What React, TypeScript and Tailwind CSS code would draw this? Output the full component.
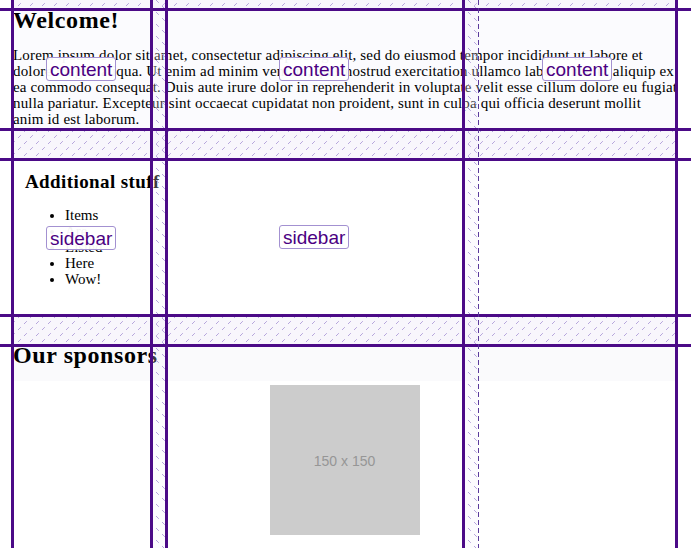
import React from "react";

const lines1 = [
  "Lorem ipsum dolor sit amet, consectetur adipiscing elit, sed do eiusmod tempor incididunt ut labore et",
  "dolore magna aliqua. Ut enim ad minim veniam, quis nostrud exercitation ullamco laboris nisi ut aliquip ex",
  "ea commodo consequat. Duis aute irure dolor in reprehenderit in voluptate velit esse cillum dolore eu fugiat",
  "nulla pariatur. Excepteur sint occaecat cupidatat non proident, sunt in culpa qui officia deserunt mollit",
  "anim id est laborum.",
];

function Label({ text, x, y }: { text: string; x: number; y: number }) {
  return (
    <div
      className="absolute h-[24px] px-[3px] border border-[#a391d1] rounded-[3px] bg-white/95 text-[#4b0082] text-[19px] leading-[23px] font-['Liberation_Sans',Arial,sans-serif] whitespace-nowrap"
      style={{ left: x, top: y }}
    >
      {text}
    </div>
  );
}

function Overlay() {
  const vLines = [11, 150, 165, 462, 675];
  const hLines = [8, 128, 158, 314, 344];
  return (
    <svg className="absolute inset-0 pointer-events-none" width={691} height={548} viewBox="0 0 691 548">
      <defs>
        <pattern id="hatchF" width="12" height="12" patternUnits="userSpaceOnUse">
          <path d="M0 12 L12 0" stroke="#b6a5dc" strokeWidth="1" strokeDasharray="4 4.5" />
        </pattern>
        <pattern id="hatchB" width="12" height="12" patternUnits="userSpaceOnUse">
          <path d="M0 0 L12 12" stroke="#b6a5dc" strokeWidth="1" strokeDasharray="4 4.5" />
        </pattern>
      </defs>
      {[
        [0, 8],
        [131, 27],
        [317, 27],
      ].map(([y, h], i) => (
        <g key={"rg" + i}>
          <rect x={14} y={y} width={661} height={h} fill="#f8f6fc" />
          <rect x={14} y={y} width={661} height={h} fill="url(#hatchF)" />
        </g>
      ))}
      {[
        [153, 12],
        [465, 13],
      ].map(([x, w], i) => (
        <g key={"cg" + i}>
          <rect x={x} y={0} width={w} height={548} fill="#f4f0fb" fillOpacity="0.25" />
          <rect x={x} y={0} width={w} height={548} fill="url(#hatchB)" />
        </g>
      ))}
      {vLines.map((x) => (
        <rect key={"v" + x} x={x} y={0} width={3} height={548} fill="#4b0a87" />
      ))}
      {hLines.map((y) => (
        <rect key={"h" + y} x={0} y={y} width={691} height={3} fill="#4b0a87" />
      ))}
      <line x1={478.5} y1={0} x2={478.5} y2={548} stroke="#5b3a9c" strokeWidth="1" strokeDasharray="5 3" />
    </svg>
  );
}

export default function App() {
  return (
    <div className="relative w-[691px] h-[548px] overflow-hidden bg-white text-black font-['Liberation_Serif','Times_New_Roman',serif]">
      <div className="ml-[12px] w-[665px] flex flex-col">
        <section className="h-[131px] pt-[8px] pl-[1px] bg-[#fbfbfe]">
          <h2 className="text-[24px] leading-[24px] font-bold tracking-[0.6px]">Welcome!</h2>
          <p className="mt-[15px] text-[15px] leading-[16px] tracking-[0.16px]">
            {lines1.map((l, i) => (
              <span key={i} className="block whitespace-nowrap">
                {l}
              </span>
            ))}
          </p>
        </section>
        <div className="h-[27px]" />
        <section className="h-[159px] pt-[13px] pl-[13px]">
          <h3 className="text-[19px] leading-[22px] font-bold whitespace-nowrap tracking-[0.4px]">Additional stuff</h3>
          <ul className="mt-[14px] pl-[40px] list-disc text-[15px] leading-[16px]">
            <li>Items</li>
            <li>Are</li>
            <li>Listed</li>
            <li>Here</li>
            <li>Wow!</li>
          </ul>
        </section>
        <div className="h-[26px]" />
        <section className="flex flex-col">
          <h2 className="pl-[1px] text-[24px] leading-[24px] font-bold tracking-[0.6px] bg-[#fafafc] pb-[14px]">Our sponsors</h2>
          <div className="mt-[4px] mx-auto w-[150px] h-[150px] bg-[#cccccc] flex items-center justify-center pt-[3px] text-[#969696] text-[14px] font-['Liberation_Sans',Arial,sans-serif]">
            150 x 150
          </div>
        </section>
      </div>
      <Overlay />
      <Label text="content" x={46} y={57} />
      <Label text="content" x={279} y={57} />
      <Label text="content" x={542} y={57} />
      <Label text="sidebar" x={46} y={226} />
      <Label text="sidebar" x={279} y={225} />
    </div>
  );
}
